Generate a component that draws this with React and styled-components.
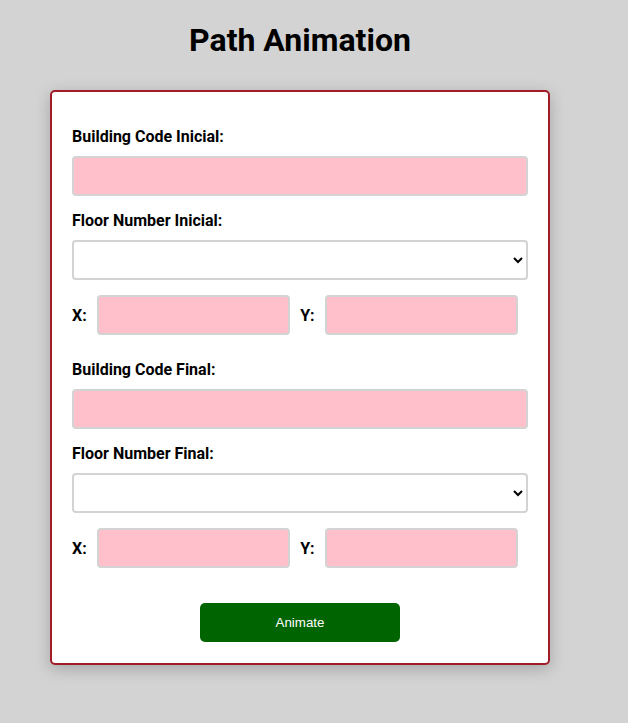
import React, { useState } from 'react'
import styled, { createGlobalStyle } from 'styled-components'

const GlobalStyle = createGlobalStyle`
  body {
    margin: 0;
    background-color: #d3d3d3;
    font-family: Roboto, "Liberation Sans", sans-serif;
  }
`

const Page = styled.div`
  width: 600px;
  padding-bottom: 40px;
`

const Title = styled.h1`
  margin: 21px 0 31px;
  font-size: 32px;
  font-weight: 700;
  text-align: center;
  color: #000;
`

const Card = styled.form`
  width: 500px;
  box-sizing: border-box;
  margin: 0 auto;
  padding: 35px 20px 21px;
  background-color: #fff;
  border: 2px solid #a11c28;
  border-radius: 5px;
  box-shadow: 0 4px 16px rgba(0, 0, 0, 0.22);
`

const Label = styled.label`
  display: block;
  margin-bottom: 10px;
  font-size: 16px;
  font-weight: 700;
  color: #000;
`

const TextInput = styled.input`
  display: block;
  width: 100%;
  height: 40px;
  box-sizing: border-box;
  margin-bottom: 15px;
  background-color: #ffc0cb;
  border: 2px solid #d3d3d3;
  border-radius: 4px;
  outline: none;
`

const Select = styled.select`
  display: block;
  width: 100%;
  height: 40px;
  box-sizing: border-box;
  margin-bottom: 15px;
  background-color: #fff;
  border: 2px solid #d3d3d3;
  border-radius: 4px;
  outline: none;
`

const CoordRow = styled.div`
  display: flex;
  align-items: center;
  margin-bottom: ${(props) => props.$gap};
`

const CoordLabel = styled.span`
  font-size: 16px;
  font-weight: 700;
  color: #000;
`

const CoordInput = styled.input`
  flex: 1;
  min-width: 0;
  height: 40px;
  box-sizing: border-box;
  margin: 0 10px;
  background-color: #ffc0cb;
  border: 2px solid #d3d3d3;
  border-radius: 4px;
  outline: none;
`

const ButtonRow = styled.div`
  display: flex;
  justify-content: center;
`

const Button = styled.button`
  width: 200px;
  height: 39px;
  border: none;
  border-radius: 5px;
  background-color: #006400;
  color: #fff;
  font-family: "Liberation Sans", Arial, sans-serif;
  font-size: 13.33px;
  cursor: pointer;
`

const Section = ({ kind, floors, gap }) => (
  <>
    <Label>Building Code {kind}:</Label>
    <TextInput type="text" />
    <Label>Floor Number {kind}:</Label>
    <Select defaultValue="">
      <option value=""></option>
      {floors.map((f) => (
        <option key={f} value={f}>{f}</option>
      ))}
    </Select>
    <CoordRow $gap={gap}>
      <CoordLabel>X:</CoordLabel>
      <CoordInput type="number" />
      <CoordLabel>Y:</CoordLabel>
      <CoordInput type="number" />
    </CoordRow>
  </>
)

const App = () => {
  const [floors] = useState([])

  return (
    <Page>
      <GlobalStyle />
      <Title>Path Animation</Title>
      <Card onSubmit={(e) => e.preventDefault()}>
        <Section kind="Inicial" floors={floors} gap="25px" />
        <Section kind="Final" floors={floors} gap="35px" />
        <ButtonRow>
          <Button type="submit">Animate</Button>
        </ButtonRow>
      </Card>
    </Page>
  )
}

export default App
